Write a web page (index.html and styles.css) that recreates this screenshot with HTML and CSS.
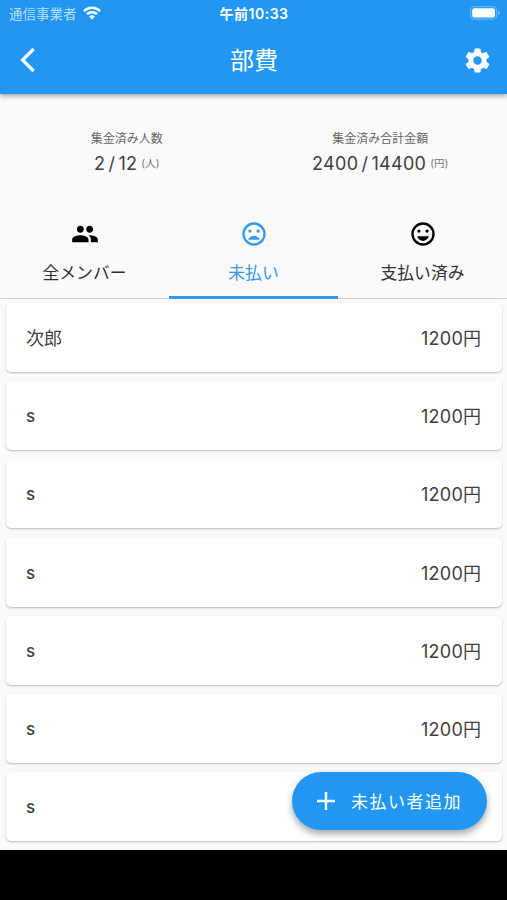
FILE: index.html
```
<!DOCTYPE html>
<html lang="ja">
<head>
<meta charset="utf-8">
<title>部費</title>
<link rel="stylesheet" href="styles.css">
</head>
<body>
<div class="app">
  <header class="header">
    <div class="status">
      <div class="carrier">
        <span>通信事業者</span>
        <svg width="18" height="14" viewBox="0 0 18 14" fill="none" stroke="#fff" stroke-width="2.5"><path d="M1 5.1a11.500 11.500 0 0 1 16 0M4 8.200a7.200 7.200 0 0 1 10 0"/><path d="M9 13.500L6.100 10.600a4.100 4.100 0 0 1 5.800 0z" fill="#fff" stroke="none"/></svg>
      </div>
      <div class="time">午前10:33</div>
      <svg class="battery" width="31" height="14" viewBox="0 0 31 14"><rect x=".6" y=".6" width="26" height="12.6" rx="3.8" fill="none" stroke="#fff" stroke-opacity=".3" stroke-width="1.2"/><rect x="2.2" y="2.2" width="22.8" height="9.4" rx="2" fill="#fff"/><path d="M28.2 4.6c2 .7 2 3.9 0 4.6z" fill="#fff" fill-opacity=".4"/></svg>
    </div>
    <div class="bar">
      <svg class="back" width="18" height="26" viewBox="0 0 18 26" fill="none" stroke="#fff" stroke-width="3.2"><path d="M15.600 2L4.600 13l11 11"/></svg>
      <h1 class="title">部費</h1>
      <svg class="gear" width="29" height="29" viewBox="0 0 24 24" fill="#fff"><path d="M19.430 12.980c.04-.32.07-.64.07-.98s-.03-.66-.07-.98l2.110-1.650c.19-.15.24-.42.12-.64l-2-3.460c-.12-.22-.39-.3-.61-.22l-2.490 1c-.52-.4-1.080-.73-1.690-.98l-.38-2.650C14.460 2.180 14.250 2 14 2h-4c-.25 0-.46.18-.49.42l-.38 2.650c-.61.25-1.170.59-1.690.98l-2.490-1c-.23-.09-.49 0-.61.22l-2 3.460c-.13.22-.07.49.12.64l2.110 1.650c-.04.32-.07.65-.07.98s.03.66.07.98l-2.110 1.650c-.19.15-.24.42-.12.64l2 3.460c.12.22.39.3.61.22l2.490-1c.52.4 1.080.73 1.690.98l.38 2.650c.03.24.24.42.49.42h4c.25 0 .46-.18.49-.42l.38-2.650c.61-.25 1.170-.59 1.690-.98l2.490 1c.23.09.49 0 .61-.22l2-3.460c.12-.22.07-.49-.12-.64l-2.110-1.650zM12 15.500c-1.930 0-3.500-1.570-3.500-3.500s1.570-3.500 3.500-3.500 3.500 1.570 3.500 3.500-1.570 3.500-3.500 3.500z"/></svg>
    </div>
  </header>

  <section class="summary">
    <div class="stat">
      <div class="stat-label">集金済み人数</div>
      <div class="stat-value"><span class="num">2 / 12</span><span class="unit">(人)</span></div>
    </div>
    <div class="stat">
      <div class="stat-label">集金済み合計金額</div>
      <div class="stat-value"><span class="num">2400 / 14400</span><span class="unit">(円)</span></div>
    </div>
  </section>

  <nav class="tabs">
    <div class="tab">
      <svg width="29" height="29" viewBox="0 0 24 24"><path d="M16 11c1.660 0 2.990-1.340 2.990-3S17.660 5 16 5s-3 1.340-3 3 1.340 3 3 3zm-8 0c1.660 0 2.990-1.340 2.990-3S9.660 5 8 5 5 6.340 5 8s1.340 3 3 3zm0 2c-2.330 0-7 1.170-7 3.500V19h14v-2.500c0-2.330-4.670-3.500-7-3.500zm8 0c-.29 0-.62.02-.97.05 1.160.840 1.970 1.970 1.970 3.450V19h6v-2.500c0-2.330-4.670-3.500-7-3.500z"/></svg>
      <span>全メンバー</span>
    </div>
    <div class="tab active">
      <svg width="29" height="29" viewBox="0 0 24 24"><circle cx="12" cy="12" r="9" fill="none" stroke="currentColor" stroke-width="2"/><circle cx="8.500" cy="9.500" r="1.400"/><circle cx="15.500" cy="9.500" r="1.400"/><path d="M12 13.500c-2.330 0-4.310 1.460-5.110 3.500h10.220c-.8-2.040-2.780-3.500-5.110-3.500z"/></svg>
      <span>未払い</span>
    </div>
    <div class="tab">
      <svg width="29" height="29" viewBox="0 0 24 24"><circle cx="12" cy="12" r="9" fill="none" stroke="currentColor" stroke-width="2"/><circle cx="8.500" cy="9.500" r="1.400"/><circle cx="15.500" cy="9.500" r="1.400"/><path d="M12 18c2.280 0 4.220-1.660 5-4H7c.78 2.340 2.720 4 5 4z"/></svg>
      <span>支払い済み</span>
    </div>
  </nav>

  <main class="list">
    <div class="card"><span>次郎</span><span class="fee">1200円</span></div>
    <div class="card"><span class="latin">s</span><span class="fee">1200円</span></div>
    <div class="card"><span class="latin">s</span><span class="fee">1200円</span></div>
    <div class="card"><span class="latin">s</span><span class="fee">1200円</span></div>
    <div class="card"><span class="latin">s</span><span class="fee">1200円</span></div>
    <div class="card"><span class="latin">s</span><span class="fee">1200円</span></div>
    <div class="card"><span class="latin">s</span></div>
  </main>
  <div class="bottom"></div>

  <button class="fab">
    <svg width="18" height="18" viewBox="0 0 18 18" stroke="#fff" stroke-width="2.400"><path d="M9 0v18M0 9h18"/></svg>
    <span>未払い者追加</span>
  </button>
</div>
</body>
</html>
```
FILE: styles.css
```
* { box-sizing: border-box; }
body {
  margin: 0;
  background: #fafafa;
  font-family: Inter, "Noto Sans CJK JP", sans-serif;
  color: #3f3f3f;
}
svg { display: block; fill: currentColor; flex: none; }
.app {
  position: relative;
  width: 507px;
  height: 900px;
  overflow: hidden;
  display: flex;
  flex-direction: column;
}
.header {
  flex: none;
  height: 94px;
  background: #2196f3;
  color: #fff;
  box-shadow: 0 2px 5px rgba(0, 0, 0, .36);
}
.status {
  height: 27px;
  padding: 0 6px 0 9px;
  display: grid;
  grid-template-columns: 1fr auto 1fr;
  align-items: center;
  font-size: 13.500px;
  line-height: 20px;
}
.carrier { display: flex; align-items: center; gap: 6px; color: #b9dffb; }
.carrier svg { fill: none; margin-bottom: 2px; }
.time { font-size: 14px; font-weight: 600; padding-right: 2px; letter-spacing: .5px; }
.battery { justify-self: end; margin-bottom: 1px; }
.bar {
  height: 66px;
  padding: 0 15px 0 18px;
  display: grid;
  grid-template-columns: 1fr auto 1fr;
  align-items: center;
}
.back { fill: none; }
.title { margin: 0; padding: 2px 2px 0 0; font-size: 24px; line-height: 32px; font-weight: 400; }
.gear { justify-self: end; fill: #fff; }
.summary {
  flex: none;
  height: 113px;
  padding-top: 36px;
  display: grid;
  grid-template-columns: 1fr 1fr;
}
.stat { display: flex; flex-direction: column; align-items: center; }
.stat-label { font-size: 12px; line-height: 17px; color: #666; }
.stat-value { display: flex; align-items: center; gap: 4px; line-height: 34px; }
.num { font-size: 18px; letter-spacing: .3px; word-spacing: -2.200px; white-space: nowrap; }
.unit { font-size: 10.500px; color: #777; }
.tabs {
  flex: none;
  height: 92px;
  display: grid;
  grid-template-columns: repeat(3, 1fr);
  border-bottom: 1px solid #cfcfcf;
}
.tab {
  display: flex;
  flex-direction: column;
  align-items: center;
  padding-top: 13px;
  gap: 13px;
  font-size: 16.800px;
  line-height: 24px;
  color: #000;
}
.tab svg { width: 28px; height: 28px; }
.tab span { color: #303030; }
.tab.active, .tab.active span { color: #3698e8; }
.tab.active { border-bottom: 3px solid #3698e8; margin-bottom: -1px; }
.list {
  flex: none;
  height: 551px;
  padding: 4px 5px 0 6px;
  display: flex;
  flex-direction: column;
  gap: 9.200px;
}
.card {
  flex: none;
  height: 69px;
  padding: 3px 21px 0 20px;
  display: flex;
  align-items: center;
  justify-content: space-between;
  background: #fff;
  border-radius: 5px;
  box-shadow: 0 1px 2px rgba(0, 0, 0, .26);
  font-size: 18px;
  line-height: 26px;
}
.fee { letter-spacing: .25px; margin-right: -.25px; }
.latin { font-size: 17px; font-weight: 500; padding-bottom: 2px; }
.bottom { flex: none; height: 50px; background: #000; }
.fab {
  position: absolute;
  left: 292px;
  top: 772px;
  width: 195px;
  height: 58px;
  padding: 0 0 0 25px;
  border: 0;
  border-radius: 29px;
  background: #2196f3;
  color: #fff;
  display: flex;
  align-items: center;
  gap: 16px;
  font: 400 17px/24px Inter, "Noto Sans CJK JP", sans-serif;
  letter-spacing: 1.500px;
  white-space: nowrap;
  box-shadow: 0 4px 7px rgba(0, 0, 0, .35);
}
.fab span { padding-top: 2px; }
```
